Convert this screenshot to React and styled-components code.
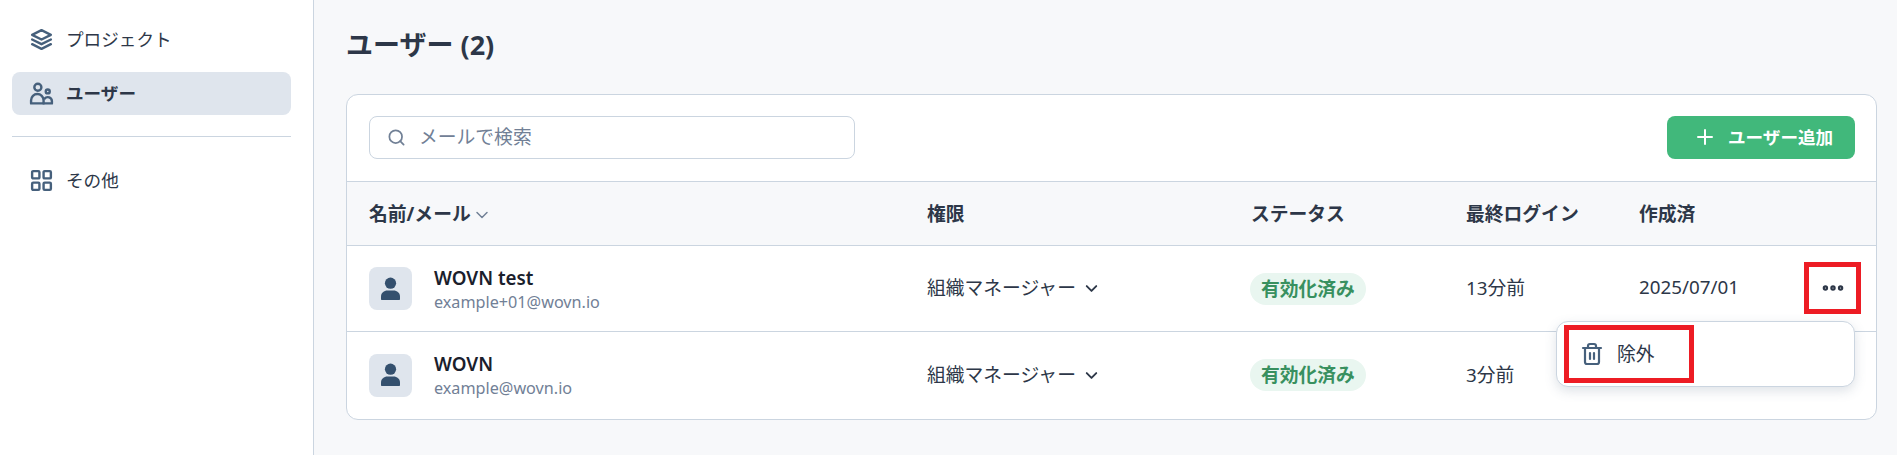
import styled, { createGlobalStyle } from "styled-components";
import { ChevronDown, Ellipsis, LayoutGrid, Plus, Search, Trash2 } from "lucide-react";

const GlobalStyle = createGlobalStyle`
  html, body {
    margin: 0;
    padding: 0;
    background: #f7f8fa;
  }
  body {
    font-family: "Noto Sans", "Noto Sans CJK JP", sans-serif;
    font-size: 18.8px;
    color: #2d3748;
  }
  * {
    box-sizing: border-box;
  }
`;

const COLUMNS = "558px 324px 215px 173px 1fr";

const users = [
  { name: "WOVN test", email: "example+01@wovn.io", login: "13分前", created: "2025/07/01" },
  { name: "WOVN", email: "example@wovn.io", login: "3分前", created: "" },
];

const LayersIcon = () => (
  <svg width="25" height="25" viewBox="0 0 24 24" fill="none" stroke="#46607c" strokeWidth="2.300" strokeLinejoin="round" strokeLinecap="round">
    <path d="M12 3l9 4.500-9 4.500-9-4.500z" />
    <path d="M3 12l9 4.500 9-4.500" />
    <path d="M3 16.500L12 21l9-4.500" />
  </svg>
);

const UsersIcon = () => (
  <svg width="25" height="25" viewBox="0 0 24 24" fill="none" stroke="#46607c" strokeWidth="2.300" strokeLinejoin="round" strokeLinecap="round">
    <circle cx="8.500" cy="6" r="3.400" />
    <circle cx="18" cy="10" r="1.900" />
    <path d="M2 21.500v-3a6 6 0 0 1 12 0v3z" />
    <path d="M14 21.500h8v-2a4 4 0 0 0-7-2.600" />
  </svg>
);

const PersonIcon = () => (
  <svg width="19" height="24" viewBox="0 0 19 24" fill="#34506e">
    <circle cx="9.500" cy="6.200" r="5.600" />
    <path d="M1 23c-.6 0-1-.4-1-1v-2.500C0 16 3 13.500 6.500 13.500h6C16 13.500 19 16 19 19.500V22c0 .6-.4 1-1 1z" />
  </svg>
);

const Page = styled.div`
  display: flex;
  height: 455px;
  overflow: hidden;
`;

const Sidebar = styled.aside`
  width: 314px;
  flex-shrink: 0;
  background: #fff;
  border-right: 1px solid #cbd5e0;
  padding: 18px 22px 0 12px;
`;

const NavItem = styled.div`
  display: flex;
  align-items: center;
  gap: 12px;
  height: 43px;
  padding-left: 17px;
  padding-bottom: 2px;
  border-radius: 8px;
  margin-bottom: 11px;
  font-size: 17.6px;
  background: ${(props) => (props.$active ? "#dfe5ed" : "transparent")};
  font-weight: ${(props) => (props.$active ? 700 : 400)};
  svg {
    flex-shrink: 0;
    margin-top: 2px;
  }
`;

const Divider = styled.hr`
  border: 0;
  border-top: 1px solid #cbd5e0;
  margin: 21px 0 22px;
`;

const Main = styled.main`
  flex: 1;
  min-width: 0;
  padding: 26px 20px 0 32px;
`;

const Title = styled.h1`
  margin: 0 0 30px;
  font-size: 27px;
  line-height: 38px;
  font-weight: 700;
  color: #2d3748;
`;

const Card = styled.section`
  position: relative;
  background: #fff;
  border: 1px solid #cbd5e0;
  border-radius: 12px;
  height: 326px;
`;

const Toolbar = styled.div`
  display: flex;
  align-items: center;
  justify-content: space-between;
  height: 86px;
  padding: 0 21px 1px 22px;
`;

const SearchBox = styled.div`
  display: flex;
  align-items: center;
  gap: 13px;
  width: 486px;
  height: 43px;
  padding: 0 0 3px 17px;
  border: 1px solid #cbd5e0;
  border-radius: 8px;
  color: #718096;
  svg {
    margin-top: 3px;
  }
`;

const AddButton = styled.button`
  display: flex;
  align-items: center;
  gap: 11px;
  width: 188px;
  height: 43px;
  padding: 0 0 2px 26px;
  border: 0;
  border-radius: 8px;
  background: #41b87b;
  color: #fff;
  font: 700 17.6px "Noto Sans", "Noto Sans CJK JP", sans-serif;
`;

const Row = styled.div`
  display: grid;
  grid-template-columns: ${COLUMNS};
  align-items: center;
  padding-left: 22px;
  border-top: 1px solid #cbd5e0;
`;

const HeadRow = styled(Row)`
  height: 64px;
  background: #f7f8fa;
  font-weight: 700;
  padding-bottom: 1px;
`;

const BodyRow = styled(Row)`
  height: ${(props) => props.$height}px;
  padding-bottom: ${(props) => props.$inset}px;
`;

const SortLabel = styled.span`
  display: flex;
  align-items: center;
  gap: 1px;
  svg {
    color: #718096;
    margin-top: 3px;
  }
`;

const UserCell = styled.div`
  display: flex;
  align-items: center;
  gap: 22px;
`;

const Avatar = styled.div`
  display: flex;
  align-items: center;
  justify-content: center;
  width: 43px;
  height: 43px;
  border-radius: 8px;
  background: #dfe5ed;
`;

const UserText = styled.div`
  padding-top: 2px;
`;

const UserName = styled.div`
  font-weight: 600;
  line-height: 25px;
  color: #1a202c;
`;

const UserEmail = styled.div`
  font-size: 16.2px;
  line-height: 23px;
  color: #718096;
`;

const RoleSelect = styled.div`
  display: flex;
  align-items: center;
  gap: 6px;
  margin-top: -3px;
  svg {
    margin-top: 3px;
  }
`;

const Badge = styled.span`
  display: inline-flex;
  align-items: center;
  padding: 0 11px 2px;
  height: 32px;
  border-radius: 16px;
  background: #e9f6f0;
  color: #38905f;
  font-weight: 600;
  margin-left: -1px;
`;

const PlainCell = styled.div`
  margin-top: -3px;
`;

const MoreButton = styled.div`
  position: absolute;
  top: 173px;
  right: 21px;
  display: flex;
  align-items: center;
  justify-content: center;
  width: 45px;
  height: 40px;
  color: #2d3748;
`;

const Menu = styled.div`
  position: absolute;
  top: 226px;
  left: 1209px;
  display: flex;
  align-items: center;
  gap: 13px;
  width: 299px;
  height: 66px;
  padding: 0 0 2px 23px;
  background: #fff;
  border: 1px solid #cbd5e0;
  border-radius: 12px;
  box-shadow: 0 4px 12px rgba(74, 95, 120, 0.18);
  svg {
    color: #46607c;
    margin-top: 2px;
  }
`;

const Highlight = styled.div`
  position: absolute;
  top: ${(props) => props.$top}px;
  left: ${(props) => props.$left}px;
  width: ${(props) => props.$width}px;
  height: ${(props) => props.$height}px;
  border: 5px solid #ed1c24;
  pointer-events: none;
`;

const App = () => (
  <>
    <GlobalStyle />
    <Page>
      <Sidebar>
        <NavItem>
          <LayersIcon />
          プロジェクト
        </NavItem>
        <NavItem $active>
          <UsersIcon />
          ユーザー
        </NavItem>
        <Divider />
        <NavItem>
          <LayoutGrid size={25} color="#46607c" strokeWidth={2.3} />
          その他
        </NavItem>
      </Sidebar>
      <Main>
        <Title>ユーザー (2)</Title>
        <Card>
          <Toolbar>
            <SearchBox>
              <Search size={19} color="#718096" strokeWidth={2.2} />
              メールで検索
            </SearchBox>
            <AddButton>
              <Plus size={24} strokeWidth={2} />
              ユーザー追加
            </AddButton>
          </Toolbar>
          <HeadRow>
            <SortLabel>
              名前/メール
              <ChevronDown size={20} strokeWidth={1.8} />
            </SortLabel>
            <div>権限</div>
            <div>ステータス</div>
            <div>最終ログイン</div>
            <div>作成済</div>
          </HeadRow>
          {users.map((user, i) => (
            <BodyRow key={user.email} $height={i === 0 ? 86 : 88} $inset={i === 0 ? 0 : 1}>
              <UserCell>
                <Avatar>
                  <PersonIcon />
                </Avatar>
                <UserText>
                  <UserName>{user.name}</UserName>
                  <UserEmail>{user.email}</UserEmail>
                </UserText>
              </UserCell>
              <RoleSelect>
                組織マネージャー
                <ChevronDown size={19} strokeWidth={2.4} />
              </RoleSelect>
              <div>
                <Badge>有効化済み</Badge>
              </div>
              <PlainCell>{user.login}</PlainCell>
              <PlainCell>{user.created}</PlainCell>
            </BodyRow>
          ))}
          <MoreButton>
            <Ellipsis size={26} strokeWidth={3} />
          </MoreButton>
          <Menu>
            <Trash2 size={24} strokeWidth={2.2} />
            除外
          </Menu>
          <Highlight $top={167} $left={1457} $width={57} $height={52} />
          <Highlight $top={230} $left={1217} $width={130} $height={58} />
        </Card>
      </Main>
    </Page>
  </>
);

export default App;
